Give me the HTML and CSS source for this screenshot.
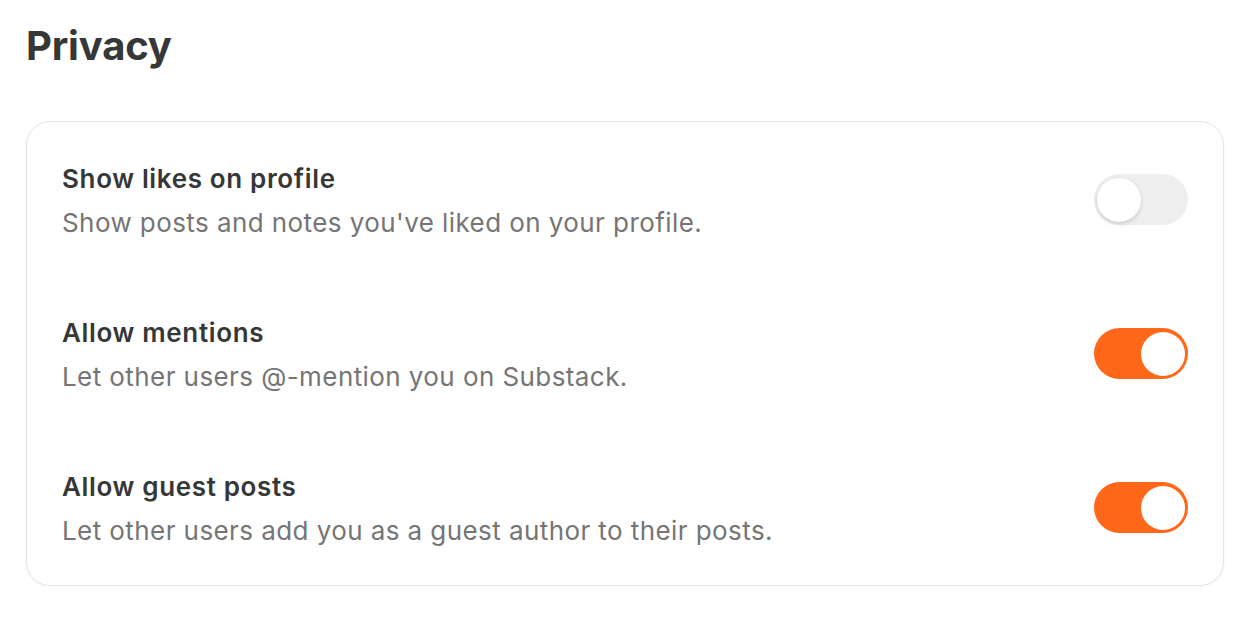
FILE: index.html
```html
<!DOCTYPE html>
<html lang="en">
<head>
  <meta charset="UTF-8" />
  <title>Privacy</title>
  <link rel="stylesheet" href="styles.css">
</head>
<body>
  <div class="page">
    <h1 class="page-title">Privacy</h1>

    <div class="settings-card">
      <div class="setting-row">
        <div class="setting-text">
          <div class="setting-label">Show likes on profile</div>
          <div class="setting-desc">Show posts and notes you've liked on your profile.</div>
        </div>
        <button class="toggle" aria-pressed="false"><span class="knob"></span></button>
      </div>

      <div class="setting-row">
        <div class="setting-text">
          <div class="setting-label">Allow mentions</div>
          <div class="setting-desc">Let other users @-mention you on Substack.</div>
        </div>
        <button class="toggle on" aria-pressed="true"><span class="knob"></span></button>
      </div>

      <div class="setting-row">
        <div class="setting-text">
          <div class="setting-label">Allow guest posts</div>
          <div class="setting-desc">Let other users add you as a guest author to their posts.</div>
        </div>
        <button class="toggle on" aria-pressed="true"><span class="knob"></span></button>
      </div>
    </div>
  </div>
</body>
</html>
```

FILE: styles.css
```css
:root {
  --orange: #ff6719;
  --ink: #363737;
  --muted: #757575;
  --line: #e4e4e4;
}

html, body {
  margin: 0;
  padding: 0;
  background: #fff;
  font-family: Inter, "Noto Sans", sans-serif;
  color: var(--ink);
}

.page {
  padding: 20px 29px 0 26px;
}

.page-title {
  margin: 0;
  font-size: 40px;
  line-height: 52px;
  font-weight: 700;
  letter-spacing: -0.2px;
}

.settings-card {
  margin-top: 49px;
  border: 1.5px solid var(--line);
  border-radius: 24px;
  box-shadow: 0 1px 3px rgba(0, 0, 0, 0.05);
  padding: 40px 35px 37px 35px;
  display: flex;
  flex-direction: column;
  gap: 76px;
}

.setting-row {
  display: flex;
  align-items: center;
  justify-content: space-between;
}

.setting-label {
  font-size: 26px;
  line-height: 34px;
  font-weight: 600;
  letter-spacing: 0.65px;
}

.setting-desc {
  margin-top: 10px;
  font-size: 26px;
  line-height: 34px;
  letter-spacing: 0.42px;
  color: var(--muted);
}

.toggle {
  position: relative;
  width: 94px;
  height: 51px;
  margin-bottom: 4px;
  border: none;
  border-radius: 26px;
  background: #eeeeee;
  padding: 0;
  cursor: pointer;
  flex-shrink: 0;
}

.toggle .knob {
  position: absolute;
  top: 4px;
  left: 3px;
  width: 44px;
  height: 44px;
  border-radius: 50%;
  background: #fff;
  box-shadow: 0 2px 4px rgba(0, 0, 0, 0.15);
}

.toggle.on {
  background: var(--orange);
}

.toggle.on .knob {
  left: 47px;
  box-shadow: none;
}
```
